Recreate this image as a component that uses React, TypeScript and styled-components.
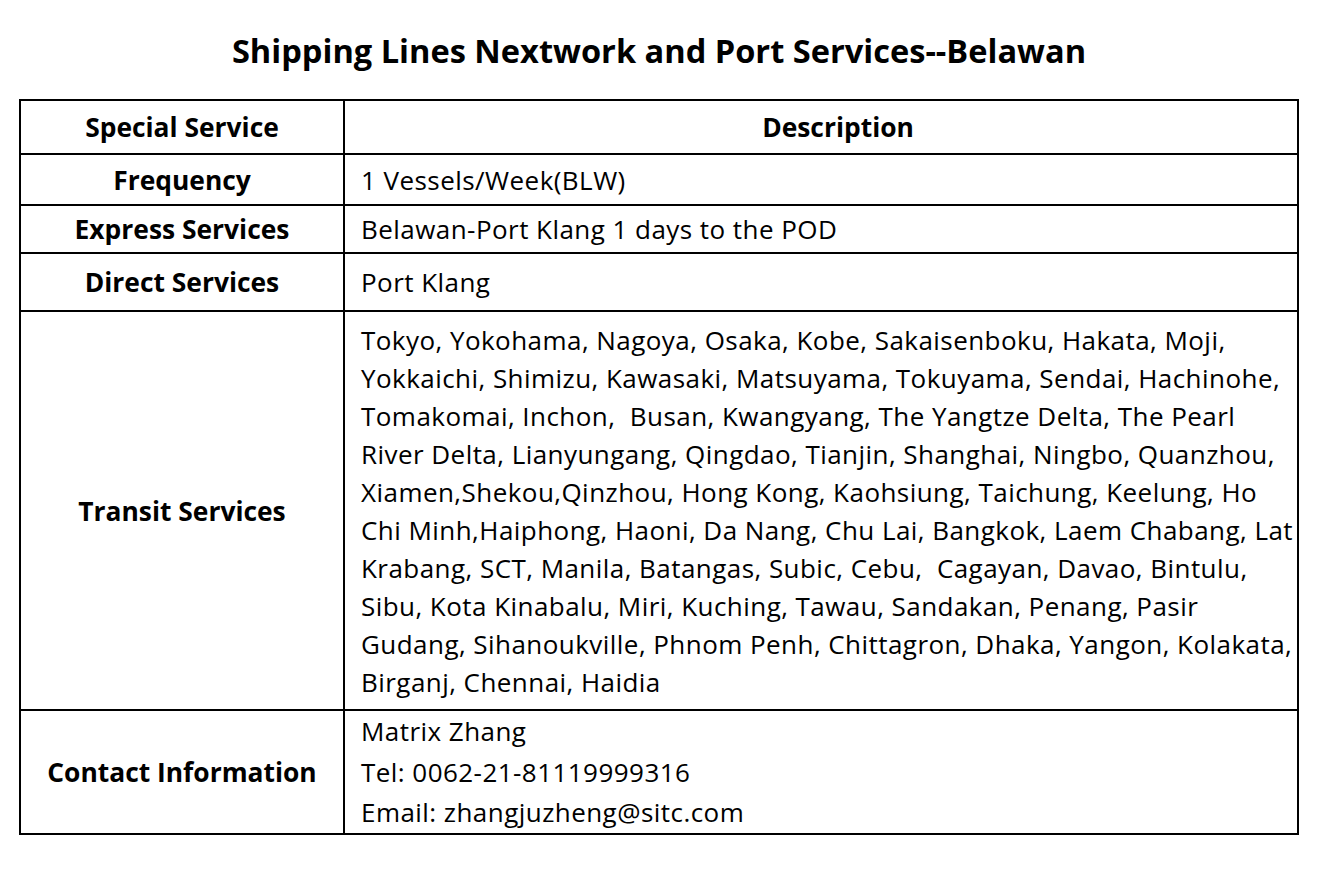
import styled, { createGlobalStyle } from "styled-components";

const GlobalStyle = createGlobalStyle`
  html, body {
    margin: 0;
    padding: 0;
    background: #ffffff;
  }
  body {
    font-family: "Open Sans", "Noto Sans", "Noto Sans CJK SC", sans-serif;
    color: #000000;
  }
`;

const Page = styled.div`
  width: 1319px;
  height: 872px;
  padding: 27px 0 0 19px;
  box-sizing: border-box;
`;

const Title = styled.h1`
  margin: 0;
  width: 1280px;
  height: 72px;
  box-sizing: border-box;
  padding-top: 2px;
  text-align: center;
  font-size: 32.6px;
  font-weight: 700;
  line-height: 44px;
`;

const Table = styled.table`
  width: 1280px;
  border-collapse: collapse;
  table-layout: fixed;
`;

const Row = styled.tr<{ $h: number }>`
  height: ${({ $h }) => $h}px;
`;

const LabelCell = styled.td`
  width: 322px;
  border: 2px solid #000;
  text-align: center;
  vertical-align: middle;
  font-size: 26.4px;
  font-weight: 700;
  padding: 0;
`;

const HeadCell = styled.td`
  border: 2px solid #000;
  text-align: center;
  vertical-align: middle;
  font-size: 26.4px;
  font-weight: 700;
  padding: 0 0 0 34px;
`;

const DescCell = styled.td`
  border: 2px solid #000;
  vertical-align: middle;
  font-size: 26px;
  letter-spacing: 0.45px;
  line-height: 38px;
  padding: 0 0 0 16px;
`;

const Line = styled.span<{ $lh?: number }>`
  display: block;
  white-space: pre;
  line-height: ${({ $lh }) => $lh ?? 38}px;
`;

const transit = [
  "Tokyo, Yokohama, Nagoya, Osaka, Kobe, Sakaisenboku, Hakata, Moji,",
  "Yokkaichi, Shimizu, Kawasaki, Matsuyama, Tokuyama, Sendai, Hachinohe,",
  "Tomakomai, Inchon,  Busan, Kwangyang, The Yangtze Delta, The Pearl",
  "River Delta, Lianyungang, Qingdao, Tianjin, Shanghai, Ningbo, Quanzhou,",
  "Xiamen,Shekou,Qinzhou, Hong Kong, Kaohsiung, Taichung, Keelung, Ho",
  "Chi Minh,Haiphong, Haoni, Da Nang, Chu Lai, Bangkok, Laem Chabang, Lat",
  "Krabang, SCT, Manila, Batangas, Subic, Cebu,  Cagayan, Davao, Bintulu,",
  "Sibu, Kota Kinabalu, Miri, Kuching, Tawau, Sandakan, Penang, Pasir",
  "Gudang, Sihanoukville, Phnom Penh, Chittagron, Dhaka, Yangon, Kolakata,",
  "Birganj, Chennai, Haidia",
];

const contact = [
  "Matrix Zhang",
  "Tel: 0062-21-81119999316",
  "Email: zhangjuzheng@sitc.com",
];

export default function App() {
  return (
    <Page>
      <GlobalStyle />
      <Title>Shipping Lines Nextwork and Port Services--Belawan</Title>
      <Table>
        <tbody>
          <Row $h={54}>
            <LabelCell>Special Service</LabelCell>
            <HeadCell>Description</HeadCell>
          </Row>
          <Row $h={51}>
            <LabelCell>Frequency</LabelCell>
            <DescCell>1 Vessels/Week(BLW)</DescCell>
          </Row>
          <Row $h={48}>
            <LabelCell>Express Services</LabelCell>
            <DescCell>Belawan-Port Klang 1 days to the POD</DescCell>
          </Row>
          <Row $h={58}>
            <LabelCell>Direct Services</LabelCell>
            <DescCell>Port Klang</DescCell>
          </Row>
          <Row $h={399}>
            <LabelCell>Transit Services</LabelCell>
            <DescCell>
              {transit.map((t) => (
                <Line key={t}>{t}</Line>
              ))}
            </DescCell>
          </Row>
          <Row $h={123}>
            <LabelCell>Contact Information</LabelCell>
            <DescCell>
              {contact.map((t) => (
                <Line key={t} $lh={40.5}>
                  {t}
                </Line>
              ))}
            </DescCell>
          </Row>
        </tbody>
      </Table>
    </Page>
  );
}
